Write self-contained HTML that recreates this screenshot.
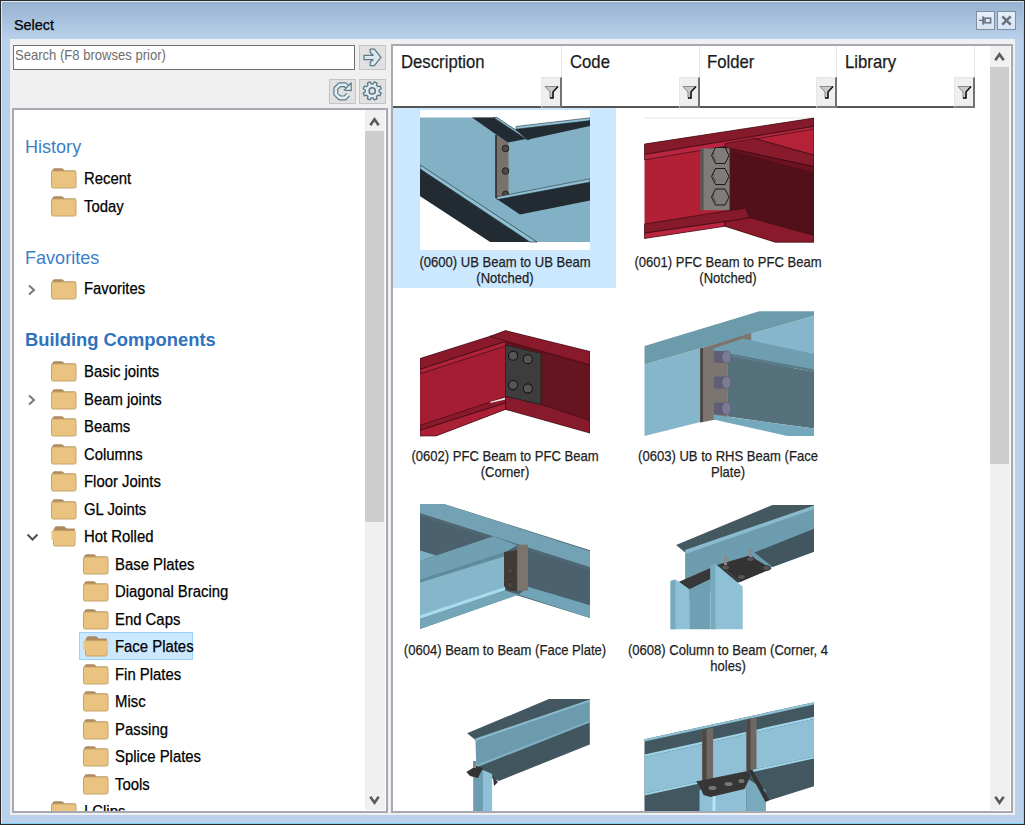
<!DOCTYPE html>
<html><head><meta charset="utf-8">
<style>
*{margin:0;padding:0;box-sizing:border-box}
html,body{width:1025px;height:825px;overflow:hidden;background:#b9d1ea;font-family:"Liberation Sans",sans-serif}
.a{position:absolute}
.it,.cap,.col,#ttxt{-webkit-text-stroke:0.25px currentColor}
#frame{left:0;top:0;width:1025px;height:825px;border:1px solid #2b2b2b;background:#b9d1ea}
#hl{left:1px;top:1px;width:1023px;height:823px;border:1px solid #dde8f3;border-right-color:#7fd3ec;border-bottom-color:#7fd3ec}
#title{left:2px;top:2px;width:1021px;height:37px;background:linear-gradient(#97b1d0,#b9d1ea)}
#ttxt{left:14px;top:14.5px;font-size:15px;line-height:19px;color:#000;transform:scaleX(0.96);transform-origin:0 0}
.tbtn{width:19px;height:19px;border:1px solid #7f8ea3;background:linear-gradient(#e6eff9,#d7e4f2)}
#panel{left:10px;top:39px;width:1005px;height:776px;background:#f0f0f0}
#search{left:13px;top:45px;width:342px;height:25px;border:1px solid #6e6e6e;background:#fff}
#stxt{left:15px;top:46px;font-size:15px;line-height:17px;color:#6d6d6d;transform:scaleX(0.87);transform-origin:0 0;white-space:nowrap}
.btn{border:1px solid #c4c4c4;background:#e1e1e1}
.pane{border:2px solid #a6a9b1;background:#fff;overflow:hidden}
.clip{overflow:hidden}
.in{left:0;top:0;width:1025px;height:825px}
.vs{background:#f0f0f0}
.thumbv{background:#cdcdcd}
.hdr{color:#3b7ec9;font-size:19px;line-height:22px;white-space:nowrap;transform:scaleX(0.95);transform-origin:0 0}
.b{font-weight:bold;font-size:18px;color:#2f72bd;transform:scaleX(1.02)}
.it{font-size:16px;line-height:19px;color:#000;white-space:nowrap;transform:scaleX(0.93);transform-origin:0 0}
.cap{font-size:15px;line-height:16.5px;color:#1e1e1e;text-align:center;white-space:nowrap;transform:scaleX(0.87);transform-origin:50% 0}
.col{font-size:19px;line-height:22px;color:#1a1a1a;white-space:nowrap;transform:scaleX(0.88);transform-origin:0 0}
.fbtn{width:21px;height:30px;background:#f0f0f0;border-right:1px solid #6b6b6b;border-bottom:1px solid #6b6b6b;border-top:1px solid #e3e3e3;border-left:1px solid #e3e3e3}
</style></head><body>
<svg width="0" height="0" style="position:absolute">
<defs>
<g id="fc">
<path d="M0.5 3.5 L2 1 Q2.6 0.2 3.6 0.2 L10.6 0.2 Q11.5 0.2 12.2 1 L13.6 2.6 L24 2.6 Q25 2.6 25 3.6 L25 5 L0.5 5 Z" fill="#ac8a5e"/>
<rect x="0.5" y="3" width="24.5" height="17" rx="1.6" fill="#e9c37f" stroke="#c7a46f" stroke-width="1"/>
</g>
<g id="fo">
<path d="M2.5 3.5 L4 1 Q4.6 0.2 5.6 0.2 L12.6 0.2 Q13.5 0.2 14.2 1 L15.6 2.6 L23 2.6 Q24 2.6 24 3.6 L24 6 L2.5 6 Z" fill="#ac8a5e"/>
<path d="M2.5 6 L2.5 18.5 Q2.5 20 4 20 L22.5 20 Q24 20 24 18.5 L24 6 Z" fill="#e9c37f" stroke="#c7a46f" stroke-width="1"/>
<path d="M0.5 6.5 Q0.5 5 2 5 L23.5 5 Q25 5 25 6.5 L25 13 Q25 14.5 23.5 14.5 L2 14.5 Q0.5 14.5 0.5 13 Z" fill="#e9c37f"/><path d="M0.5 6.5 Q0.5 5 2 5 L23.5 5 Q25 5 25 6.5" fill="none" stroke="#e3bd7c" stroke-width="0.8"/>
</g>
</defs></svg>
<div class="a" id="frame"></div>
<div class="a" id="hl"></div>
<div class="a" id="title"></div>
<div class="a" id="ttxt">Select</div>
<div class="a tbtn" style="left:976px;top:11px"></div>
<svg class="a" style="left:976px;top:11px" width="19" height="19" viewBox="0 0 19 19"><path d="M3 9.4 H7" stroke="#6b7582" stroke-width="1.3"/><path d="M7.2 5.4 V13.7" stroke="#6b7582" stroke-width="2"/><rect x="9" y="7.2" width="5.6" height="4.6" fill="none" stroke="#6b7582" stroke-width="1.6"/></svg>
<div class="a tbtn" style="left:997px;top:11px"></div>
<svg class="a" style="left:997px;top:11px" width="19" height="19" viewBox="0 0 19 19"><path d="M5.3 5.3 L13.7 13.7 M13.7 5.3 L5.3 13.7" stroke="#6b7582" stroke-width="2.6"/></svg>
<div class="a" id="panel"></div>
<div class="a" id="search"></div>
<div class="a" id="stxt">Search (F8 browses prior)</div>
<div class="a btn" style="left:359px;top:45px;width:27px;height:25px"></div>
<svg class="a" style="left:359px;top:45px" width="27" height="25" viewBox="0 0 27 25"><path d="M5 10.3 H14.2 L11.2 7.6 V4.1 H15.4 L21.9 12.4 L15.4 20.6 H11.2 V17.2 L14.2 14.6 H5 Z" fill="#dde8ee" stroke="#5b7a89" stroke-width="1.3" stroke-linejoin="round"/></svg>
<div class="a btn" style="left:329px;top:79px;width:27px;height:25px"></div>
<svg class="a" style="left:329px;top:79px" width="27" height="25" viewBox="0 0 27 25"><path d="M18.46 8.06 L16.13 5.70 L10.67 5.70 L6.80 9.57 L6.80 15.03 L10.67 18.90 L16.13 18.90 L19.05 15.56" fill="none" stroke="#5b7a89" stroke-width="5" stroke-linejoin="round"/><path d="M18.46 8.06 L16.13 5.70 L10.67 5.70 L6.80 9.57 L6.80 15.03 L10.67 18.90 L16.13 18.90 L19.05 15.56" fill="none" stroke="#e3ecf0" stroke-width="2.6" stroke-linejoin="round"/><path d="M22.2 3.8 L22.2 11.6 L15.2 11.2 Z" fill="#e3ecf0" stroke="#5b7a89" stroke-width="1.2" stroke-linejoin="round"/></svg>
<div class="a btn" style="left:359px;top:79px;width:27px;height:25px"></div>
<svg class="a" style="left:359px;top:79px" width="27" height="25" viewBox="0 0 27 25"><path d="M20.14 12.78 L22.15 14.05 L21.04 16.71 L18.73 16.19 L17.49 17.43 L18.01 19.74 L15.35 20.85 L14.08 18.84 L12.32 18.84 L11.05 20.85 L8.39 19.74 L8.91 17.43 L7.67 16.19 L5.36 16.71 L4.25 14.05 L6.26 12.78 L6.26 11.02 L4.25 9.75 L5.36 7.09 L7.67 7.61 L8.91 6.37 L8.39 4.06 L11.05 2.95 L12.32 4.96 L14.08 4.96 L15.35 2.95 L18.01 4.06 L17.49 6.37 L18.73 7.61 L21.04 7.09 L22.15 9.75 L20.14 11.02 Z" fill="#e3ecf0" stroke="#5b7a89" stroke-width="1.4" stroke-linejoin="round"/><circle cx="13.2" cy="11.9" r="3.1" fill="#e1e1e1" stroke="#5b7a89" stroke-width="1.5"/></svg>

<div class="a pane" style="left:12px;top:108px;width:376px;height:705px">
<div class="a" style="left:-14px;top:-110px;width:1025px;height:825px">
<div class="a vs" style="left:365px;top:110px;width:20px;height:700px"></div>
<div class="a thumbv" style="left:365px;top:131px;width:19px;height:391px"></div>
<svg class="a" style="left:368px;top:116px" width="13" height="12" viewBox="0 0 13 12"><path d="M2.3 9.3 L6.5 3.3 L10.7 9.3" fill="none" stroke="#5a5a5a" stroke-width="2.6"/></svg>
<svg class="a" style="left:368px;top:794px" width="13" height="12" viewBox="0 0 13 12"><path d="M2.3 2.7 L6.5 8.7 L10.7 2.7" fill="none" stroke="#5a5a5a" stroke-width="2.6"/></svg>
<div class="a hdr" style="left:25px;top:136px">History</div>
<svg class="a" style="left:51px;top:168px" width="26" height="21" viewBox="0 0 26 21"><use href="#fc"/></svg>
<div class="a it" style="left:84px;top:169.2px">Recent</div>
<svg class="a" style="left:51px;top:195.5px" width="26" height="21" viewBox="0 0 26 21"><use href="#fc"/></svg>
<div class="a it" style="left:84px;top:196.7px">Today</div>
<div class="a hdr" style="left:25px;top:246.5px">Favorites</div>
<svg class="a" style="left:27px;top:284px" width="10" height="12" viewBox="0 0 10 12"><path d="M2 1.5 L7 6 L2 10.5" fill="none" stroke="#7a7a7a" stroke-width="2"/></svg>
<svg class="a" style="left:51px;top:278.5px" width="26" height="21" viewBox="0 0 26 21"><use href="#fc"/></svg>
<div class="a it" style="left:84px;top:279.3px">Favorites</div>
<div class="a hdr b" style="left:25px;top:329px">Building Components</div>
<svg class="a" style="left:51px;top:361.4px" width="26" height="21" viewBox="0 0 26 21"><use href="#fc"/></svg>
<div class="a it" style="left:84px;top:362.2px">Basic joints</div>
<svg class="a" style="left:27px;top:393.9px" width="10" height="12" viewBox="0 0 10 12"><path d="M2 1.5 L7 6 L2 10.5" fill="none" stroke="#7a7a7a" stroke-width="2"/></svg>
<svg class="a" style="left:51px;top:388.9px" width="26" height="21" viewBox="0 0 26 21"><use href="#fc"/></svg>
<div class="a it" style="left:84px;top:389.7px">Beam joints</div>
<svg class="a" style="left:51px;top:416.4px" width="26" height="21" viewBox="0 0 26 21"><use href="#fc"/></svg>
<div class="a it" style="left:84px;top:417.2px">Beams</div>
<svg class="a" style="left:51px;top:443.9px" width="26" height="21" viewBox="0 0 26 21"><use href="#fc"/></svg>
<div class="a it" style="left:84px;top:444.7px">Columns</div>
<svg class="a" style="left:51px;top:471.4px" width="26" height="21" viewBox="0 0 26 21"><use href="#fc"/></svg>
<div class="a it" style="left:84px;top:472.2px">Floor Joints</div>
<svg class="a" style="left:51px;top:498.9px" width="26" height="21" viewBox="0 0 26 21"><use href="#fc"/></svg>
<div class="a it" style="left:84px;top:499.7px">GL Joints</div>
<div class="a" style="left:79px;top:632px;width:114px;height:28px;background:#cce8ff;border:1px solid #99d1ff"></div>
<svg class="a" style="left:26px;top:532.9px" width="13" height="9" viewBox="0 0 13 9"><path d="M1.5 1.5 L6.5 6.5 L11.5 1.5" fill="none" stroke="#505050" stroke-width="2"/></svg>
<svg class="a" style="left:51px;top:526.4px" width="26" height="21" viewBox="0 0 26 21"><use href="#fo"/></svg>
<div class="a it" style="left:84px;top:527.1999999999999px">Hot Rolled</div>
<svg class="a" style="left:83px;top:553.9px" width="26" height="21" viewBox="0 0 26 21"><use href="#fc"/></svg>
<div class="a it" style="left:115px;top:554.6999999999999px">Base Plates</div>
<svg class="a" style="left:83px;top:581.4px" width="26" height="21" viewBox="0 0 26 21"><use href="#fc"/></svg>
<div class="a it" style="left:115px;top:582.1999999999999px">Diagonal Bracing</div>
<svg class="a" style="left:83px;top:608.9px" width="26" height="21" viewBox="0 0 26 21"><use href="#fc"/></svg>
<div class="a it" style="left:115px;top:609.6999999999999px">End Caps</div>
<div class="a" style="left:79px;top:632px;width:114px;height:28px;background:#cce8ff;border:1px solid #99d1ff"></div>
<svg class="a" style="left:83px;top:636.4px" width="26" height="21" viewBox="0 0 26 21"><use href="#fo"/></svg>
<div class="a it" style="left:115px;top:637.1999999999999px">Face Plates</div>
<svg class="a" style="left:83px;top:663.9px" width="26" height="21" viewBox="0 0 26 21"><use href="#fc"/></svg>
<div class="a it" style="left:115px;top:664.6999999999999px">Fin Plates</div>
<svg class="a" style="left:83px;top:691.4px" width="26" height="21" viewBox="0 0 26 21"><use href="#fc"/></svg>
<div class="a it" style="left:115px;top:692.1999999999999px">Misc</div>
<svg class="a" style="left:83px;top:718.9px" width="26" height="21" viewBox="0 0 26 21"><use href="#fc"/></svg>
<div class="a it" style="left:115px;top:719.6999999999999px">Passing</div>
<svg class="a" style="left:83px;top:746.4px" width="26" height="21" viewBox="0 0 26 21"><use href="#fc"/></svg>
<div class="a it" style="left:115px;top:747.1999999999999px">Splice Plates</div>
<svg class="a" style="left:83px;top:773.9px" width="26" height="21" viewBox="0 0 26 21"><use href="#fc"/></svg>
<div class="a it" style="left:115px;top:774.6999999999999px">Tools</div>
<svg class="a" style="left:51px;top:801.4px" width="26" height="21" viewBox="0 0 26 21"><use href="#fc"/></svg>
<div class="a it" style="left:84px;top:802.1999999999999px">I Clips</div>
</div>
</div>
<div class="a pane" style="left:391px;top:44px;width:622px;height:769px">
<div class="a" style="left:-393px;top:-46px;width:1025px;height:825px">
<div class="a" style="left:990px;top:45px;width:20px;height:765px;background:#f0f0f0"></div>
<div class="a" style="left:990px;top:67px;width:19px;height:397px;background:#cdcdcd"></div>
<svg class="a" style="left:993px;top:51px" width="13" height="12" viewBox="0 0 13 12"><path d="M2.3 9.3 L6.5 3.3 L10.7 9.3" fill="none" stroke="#5a5a5a" stroke-width="2.6"/></svg>
<svg class="a" style="left:993px;top:794px" width="13" height="12" viewBox="0 0 13 12"><path d="M2.3 2.7 L6.5 8.7 L10.7 2.7" fill="none" stroke="#5a5a5a" stroke-width="2.6"/></svg>
<div class="a" style="left:392px;top:45px;width:170px;height:61px;background:#fff"></div>
<div class="a" style="left:561px;top:46px;width:1px;height:31px;background:#e5e5e5"></div>
<div class="a" style="left:392px;top:106px;width:149px;height:2px;background:#565656"></div>
<div class="a" style="left:541px;top:77px;width:21px;height:31px;background:#efefef;border-left:1px solid #e6e6e6;border-top:1px solid #e6e6e6;border-right:2px solid #727272;border-bottom:2px solid #7a7a7a"></div>
<svg class="a" style="left:544px;top:85px" width="15" height="15" viewBox="0 0 15 15"><path d="M1 1.5 L14 1.5 L9 7 L9 13 L6 13 L6 7 Z" fill="#c9c9c9" stroke="#8a8a8a" stroke-width="1"/><path d="M14 1.5 L9 7 L9 13 L6 13" fill="none" stroke="#111" stroke-width="1.5"/></svg>
<div class="a col" style="left:400.5px;top:51px">Description</div>
<div class="a" style="left:562px;top:45px;width:138px;height:61px;background:#fff"></div>
<div class="a" style="left:699px;top:46px;width:1px;height:31px;background:#e5e5e5"></div>
<div class="a" style="left:562px;top:106px;width:117px;height:2px;background:#565656"></div>
<div class="a" style="left:679px;top:77px;width:21px;height:31px;background:#efefef;border-left:1px solid #e6e6e6;border-top:1px solid #e6e6e6;border-right:2px solid #727272;border-bottom:2px solid #7a7a7a"></div>
<svg class="a" style="left:682px;top:85px" width="15" height="15" viewBox="0 0 15 15"><path d="M1 1.5 L14 1.5 L9 7 L9 13 L6 13 L6 7 Z" fill="#c9c9c9" stroke="#8a8a8a" stroke-width="1"/><path d="M14 1.5 L9 7 L9 13 L6 13" fill="none" stroke="#111" stroke-width="1.5"/></svg>
<div class="a col" style="left:569.5px;top:51px">Code</div>
<div class="a" style="left:700px;top:45px;width:137px;height:61px;background:#fff"></div>
<div class="a" style="left:836px;top:46px;width:1px;height:31px;background:#e5e5e5"></div>
<div class="a" style="left:700px;top:106px;width:116px;height:2px;background:#565656"></div>
<div class="a" style="left:816px;top:77px;width:21px;height:31px;background:#efefef;border-left:1px solid #e6e6e6;border-top:1px solid #e6e6e6;border-right:2px solid #727272;border-bottom:2px solid #7a7a7a"></div>
<svg class="a" style="left:819px;top:85px" width="15" height="15" viewBox="0 0 15 15"><path d="M1 1.5 L14 1.5 L9 7 L9 13 L6 13 L6 7 Z" fill="#c9c9c9" stroke="#8a8a8a" stroke-width="1"/><path d="M14 1.5 L9 7 L9 13 L6 13" fill="none" stroke="#111" stroke-width="1.5"/></svg>
<div class="a col" style="left:706.5px;top:51px">Folder</div>
<div class="a" style="left:837px;top:45px;width:138px;height:61px;background:#fff"></div>
<div class="a" style="left:974px;top:46px;width:1px;height:31px;background:#e5e5e5"></div>
<div class="a" style="left:837px;top:106px;width:117px;height:2px;background:#565656"></div>
<div class="a" style="left:954px;top:77px;width:21px;height:31px;background:#efefef;border-left:1px solid #e6e6e6;border-top:1px solid #e6e6e6;border-right:2px solid #727272;border-bottom:2px solid #7a7a7a"></div>
<svg class="a" style="left:957px;top:85px" width="15" height="15" viewBox="0 0 15 15"><path d="M1 1.5 L14 1.5 L9 7 L9 13 L6 13 L6 7 Z" fill="#c9c9c9" stroke="#8a8a8a" stroke-width="1"/><path d="M14 1.5 L9 7 L9 13 L6 13" fill="none" stroke="#111" stroke-width="1.5"/></svg>
<div class="a col" style="left:844.5px;top:51px">Library</div>
<div class="a" style="left:393px;top:108px;width:223px;height:180px;background:#cce8ff"></div>
<div class="a cap" style="left:354.75px;top:253.9px;width:300px">(0600) UB Beam to UB Beam<br>(Notched)</div>
<div class="a cap" style="left:578.25px;top:253.9px;width:300px">(0601) PFC Beam to PFC Beam<br>(Notched)</div>
<div class="a cap" style="left:354.75px;top:447.9px;width:300px">(0602) PFC Beam to PFC Beam<br>(Corner)</div>
<div class="a cap" style="left:578.25px;top:447.9px;width:300px">(0603) UB to RHS Beam (Face<br>Plate)</div>
<div class="a cap" style="left:354.75px;top:641.9px;width:300px">(0604) Beam to Beam (Face Plate)</div>
<div class="a cap" style="left:578.25px;top:641.9px;width:300px">(0608) Column to Beam (Corner, 4<br>holes)</div>
<svg class="a" style="left:420px;top:110px" width="170" height="140" viewBox="420 110 170 140">
<rect x="420" y="110" width="170" height="140" fill="#fff"/>
<polygon points="420,117.5 472,117.5 496,117.5 511,127 516,129.5 516,126.4 590,117.8 590,242 420,242" fill="#82b0c5"/>

<polygon points="472,117.5 493.5,117.5 526,139 507.5,142.5" fill="#222b32"/>
<polygon points="493.5,117.5 497,117.5 530,139.5 526,139" fill="#8fc1d5" stroke="#1c2328" stroke-width="0.6"/>
<polygon points="516,128.5 590,119.5 590,126 527,139.7 516,130" fill="#222b32"/>
<polygon points="516,126.4 590,117.8 590,120.6 516,129.2" fill="#8fc1d5" stroke="#1c2328" stroke-width="0.5"/>
<polygon points="495.5,134.5 508.5,143 508.5,198 495.5,198" fill="#7a716d"/>
<line x1="496" y1="135" x2="496" y2="198" stroke="#141414" stroke-width="1.2"/>
<g fill="#4f4a48" stroke="#222" stroke-width="1"><circle cx="505.5" cy="148.5" r="3.3"/><circle cx="505.5" cy="171" r="3.3"/><circle cx="505.5" cy="194" r="3"/></g>
<polygon points="496,198.5 590,182 590,200.6 520,214.5" fill="#222b32"/>
<polygon points="497,196.8 590,178.8 590,182 497,199.6" fill="#8fc1d5" stroke="#1c2328" stroke-width="0.5"/>
<polygon points="420,168.8 530,242 490,242 420,196.3" fill="#222b32"/>
<polygon points="420,164.8 537,242 530,242 420,168.8" fill="#8fc1d5" stroke="#1c2328" stroke-width="0.6"/>
<polygon points="420,196.3 490,242 420,242" fill="#fff"/>
</svg>
<svg class="a" style="left:643.5px;top:110px" width="170" height="140" viewBox="643.5 110 170 140">
<rect x="643.5" y="110" width="170" height="140" fill="#fff"/>
<rect x="644" y="117.5" width="169.5" height="1" fill="#e6e6e6"/>
<polygon points="644,144 813.5,118 813.5,242.2 774.6,242.2 724.4,226.3 644,238.5" fill="#b22036"/>
<polygon points="644,144 813.5,118 813.5,126.4 644,154.6" fill="#851a2a" stroke="#2a0a0e" stroke-width="0.6"/>
<polygon points="644,154.6 813.5,126.4 813.5,131.5 644,159.8" fill="#bb2540" stroke="#2a0a0e" stroke-width="0.6"/>
<polygon points="754,139 813.5,129 813.5,155.2" fill="#b52238" stroke="#2a0a0e" stroke-width="0.6"/>
<polygon points="724.5,143.5 754,138.3 813.5,155.2 813.5,166.7 724.5,147.5" fill="#871a2b" stroke="#2a0a0e" stroke-width="0.6"/>
<polygon points="724.5,147.5 813.5,166.7 813.5,173.2 729,150.5" fill="#6a1220" stroke="#2a0a0e" stroke-width="0.6"/>
<polygon points="729,150.5 813.5,173.2 813.5,235.4 749.3,217.8 729,212" fill="#52101a"/>
<rect x="700" y="148.4" width="29" height="61.8" fill="#7e7b79"/>
<rect x="700" y="148.4" width="3" height="61.8" fill="#555"/>
<g fill="#7f7c7a" stroke="#1a1a1a" stroke-width="1">
<polygon points="715,147.5 724.5,147.5 728.5,155.5 724.5,163.5 715,163.5 711,155.5"/>
<polygon points="715,168.5 724.5,168.5 728.5,176.5 724.5,184.5 715,184.5 711,176.5"/>
<polygon points="715,189 724.5,189 728.5,197 724.5,205 715,205 711,197"/>
</g>
<g fill="none" stroke="#3a3a3a" stroke-width="0.7"><path d="M713.5 150 L712.5 155.5 L715.5 161"/><path d="M713.5 171 L712.5 176.5 L715.5 182"/><path d="M713.5 191.5 L712.5 197 L715.5 202.5"/></g>
<polygon points="644,224 729,210.5 745,208 749.3,217.8 724.4,221.7 644,233.2" fill="#851a2a" stroke="#2a0a0e" stroke-width="0.6"/>
<polygon points="644,233.2 724.4,221.7 724.4,226.3 644,238.5" fill="#bb2540" stroke="#2a0a0e" stroke-width="0.6"/>
<polygon points="724.4,221.7 749.3,217.8 813.5,235.4 813.5,242.2 774.6,242.2 724.4,226.3" fill="#8a1a2b" stroke="#2a0a0e" stroke-width="0.6"/>
</svg>
<svg class="a" style="left:420px;top:304px" width="170" height="140" viewBox="420 304 170 140">
<rect x="420" y="304" width="170" height="140" fill="#fff"/>
<polygon points="420,358.5 490.3,336.2 505.5,330.6 590,351.5 590,433.1 505.5,409.4 436,436 420,436" fill="#a51d32"/>
<polygon points="420,358.5 490.3,336.2 505.5,333 505.5,341.5 420,369.4" fill="#8a1a2b" stroke="#2a0a0e" stroke-width="0.6"/>
<polygon points="420,369.4 505.5,341.5 505.5,346 420,373.8" fill="#b02238" stroke="#2a0a0e" stroke-width="0.6"/>
<polygon points="420,425.4 505.5,397 505.5,403 420,430.3" fill="#8a1a2b" stroke="#2a0a0e" stroke-width="0.6"/>
<polygon points="420,430.3 505.5,403 505.5,409.4 436,436 420,436" fill="#ac2036" stroke="#2a0a0e" stroke-width="0.6"/>
<polygon points="490.3,401.7 505.5,397.5 505.5,399.5 490.3,403" fill="#e8e8e8"/>
<polygon points="490.3,336.2 505.5,330.6 590,351.5 590,364.7 505.5,341" fill="#891a2b" stroke="#2a0a0e" stroke-width="0.6"/>
<polygon points="505.5,341 590,364.7 590,366.5 505.5,343" fill="#5a1019"/>
<polygon points="505.5,343 590,366.5 590,420.5 541,404.5 505.5,396" fill="#661420"/>
<polygon points="505.5,396 541,404.5 590,420.5 590,433.1 505.5,409.4" fill="#871a2b" stroke="#2a0a0e" stroke-width="0.6"/>
<polygon points="505.5,345 541,353.6 541,404.5 505.5,396.1" fill="#3d3d3d" stroke="#1a1a1a" stroke-width="0.6"/>
<g fill="#555" stroke="#151515" stroke-width="1.1">
<circle cx="513.1" cy="355.7" r="4.6"/><circle cx="527.8" cy="359.2" r="4.6"/>
<circle cx="513.1" cy="385" r="4.6"/><circle cx="527.8" cy="388.5" r="4.6"/>
</g>
</svg>
<svg class="a" style="left:643.5px;top:304px" width="170" height="140" viewBox="643.5 304 170 140">
<rect x="643.5" y="304" width="170" height="140" fill="#fff"/>
<polygon points="644,364.5 813.7,315.6 813.7,356 700,422 644,435.9" fill="#86b6cb"/>
<polygon points="644,345.9 758.8,311.3 813.7,311.3 813.7,315.6 644,364.5" fill="#6c9bac"/>
<polygon points="700,348.5 750.7,333 750.7,340 727,347 727,418 713,420 700,422.5" fill="#7b746f"/>
<polygon points="699.7,348.5 702.5,347.7 702.5,421.8 699.7,422.5" fill="#4a4542"/>
<polygon points="713,348.4 742.6,338.6 813.7,354.1 813.7,372 713,350.5" fill="#6e9eaf"/>
<polygon points="713,350.5 813.7,369.6 813.7,372 713,352.5" fill="#587985"/>
<polygon points="727,355.2 813.7,372 813.7,428.6 727,416.6" fill="#54717c"/>
<polygon points="713,414.7 813.7,428.6 813.7,435.9 786.7,435.9 713,419.6" fill="#74a8bb"/>
<g><rect x="713.5" y="351" width="12" height="12" rx="2" fill="#5e5e76"/><ellipse cx="726" cy="357" rx="4.6" ry="6.2" fill="#7b7b97" stroke="#55556b" stroke-width="0.6"/><rect x="713.5" y="376.5" width="12" height="12" rx="2" fill="#5e5e76"/><ellipse cx="726" cy="382.5" rx="4.6" ry="6.2" fill="#7b7b97" stroke="#55556b" stroke-width="0.6"/><rect x="713.5" y="402.5" width="12" height="12" rx="2" fill="#5e5e76"/><ellipse cx="726" cy="408.5" rx="4.6" ry="6.2" fill="#7b7b97" stroke="#55556b" stroke-width="0.6"/></g>
</svg>
<svg class="a" style="left:420px;top:498px" width="170" height="140" viewBox="420 498 170 140">
<rect x="420" y="498" width="170" height="140" fill="#fff"/>
<polygon points="420,503.9 443.8,503.9 590,550.3 590,618 516,595 420,629" fill="#4b626e"/>
<polygon points="420,503.9 443.8,503.9 590,551.3 590,567.3 420,513.2" fill="#72a2b4"/>
<polygon points="420,513.2 590,567.3 590,570.7 420,516" fill="#506874"/>
<polygon points="420,550.6 436.2,555.6 420,561" fill="#7eb0c2"/>
<polygon points="420,561 436.2,555.6 493.4,536.3 517.3,545.3 505,552.3 420,580" fill="#70a0b2"/>

<polygon points="420,580 505,552.3 505,556 420,582.5" fill="#5f8d9e"/>
<polygon points="420,582.5 505,556 505,588 420,615" fill="#86b6ca"/>
<polygon points="420,615 505,587 505,590.5 420,619" fill="#a6dcef"/>
<polygon points="420,619 505,590.5 518.7,594.7 420,629" fill="#74a6b8"/>
<polygon points="528,586.7 590,605.3 590,618 518.7,594.7" fill="#72a4b7"/>
<polygon points="504,552 517.3,550 517.3,591.5 508,590.5 504,586" fill="#403b38"/>
<rect x="517.3" y="544.7" width="10.7" height="46" fill="#7b736e"/>
<g fill="#4a4542" stroke="#2e2a28" stroke-width="0.6"><circle cx="510" cy="571" r="3"/><circle cx="510" cy="585" r="3"/></g>
</svg>
<svg class="a" style="left:643.5px;top:498px" width="170" height="140" viewBox="643.5 498 170 140">
<rect x="643.5" y="498" width="170" height="140" fill="#fff"/>
<polygon points="684.6,552.4 813.7,506.5 813.7,551.6 772,567.1 740,582 688.7,600 684.6,600" fill="#6d9cae"/>
<polygon points="675.6,545 772,504.9 813.7,504.9 813.7,506.5 684.6,552.4" fill="#43585f"/>
<polygon points="684.6,550 813.7,505.5 813.7,509 684.6,554" fill="#8abacd"/>
<polygon points="754,552.4 813.7,528.6 813.7,551.6 772,567.1" fill="#42565f"/>
<polygon points="718,564.6 749.1,555.6 771.2,568.7 740.1,581.8" fill="#333"/>
<polygon points="678,582 718,564.6 740.1,581.8 688.7,590" fill="#383838"/>
<g fill="#555" stroke="#222" stroke-width="0.6">
<ellipse cx="725" cy="567.5" rx="4" ry="2.5"/><ellipse cx="750" cy="559" rx="4" ry="2.5"/><ellipse cx="766" cy="568" rx="4" ry="2.5"/><ellipse cx="741" cy="577" rx="4" ry="2.5"/>
</g>
<rect x="723.5" y="556" width="3" height="9" fill="#8a8a8a"/><rect x="748.5" y="548" width="3" height="9" fill="#8a8a8a"/>
<polygon points="688.7,589.2 710,579 710,629.3 688.7,629.3" fill="#6f9fb2"/>
<polygon points="670,581 675,579.5 688.7,589 688.7,629.3 670,629.3" fill="#8fc1d6"/>
<polygon points="670,581 675,579.5 675,629.3 670,629.3" fill="#78aabd"/>
<polygon points="710,565.2 715,564 742.2,586.7 742.2,629.3 710,629.3" fill="#8fc1d6"/>
<polygon points="710,565.2 715,564 715,629.3 710,629.3" fill="#79abbe"/>
</svg>
<svg class="a" style="left:420px;top:692px" width="170" height="140" viewBox="420 692 170 140">
<rect x="420" y="692" width="170" height="140" fill="#fff"/>
<polygon points="467.1,733.2 548.9,699.1 589.8,699.1 589.8,700.5 475.5,740" fill="#42575f"/>
<polygon points="475.5,740 589.8,700.5 589.8,721.8 476.2,766.5" fill="#6c9bad"/>
<polygon points="475.5,738.5 589.8,699.5 589.8,701.5 475.5,741" fill="#8abacd"/>
<polygon points="476.2,766.5 589.8,721.8 589.8,744.5 498.9,780.9 476,772" fill="#42565f"/>
<polygon points="476.2,765 589.8,720.5 589.8,722.5 476.2,767.5" fill="#7fb0c3"/>
<polygon points="473.2,772 483,770 483,832 473.2,832" fill="#6d9db0"/>
<polygon points="483,770 492.1,774 492.1,832 483,832" fill="#8fc1d6"/>
<polygon points="466.4,772 476,766 483,768 478,778 470,776" fill="#333"/>
<polygon points="493,777 498,782 494,786" fill="#333"/>
<rect x="473" y="761" width="3" height="7" fill="#888"/>
</svg>
<svg class="a" style="left:643.5px;top:692px" width="170" height="140" viewBox="643.5 692 170 140">
<rect x="643.5" y="692" width="170" height="140" fill="#fff"/>
<polygon points="644,739.2 813.7,702.2 813.7,832 644,832" fill="#42575f"/>
<polygon points="644,739.2 813.7,702.2 813.7,704.5 644,741.5" fill="#8fc1d6"/>
<polygon points="644,754.6 813.7,716.7 813.7,719 644,757" fill="#a0d4e8"/>
<polygon points="644,757 813.7,719 813.7,756.4 644,793.4" fill="#8fc0d5"/>
<polygon points="644,793.4 813.7,756.4 813.7,758.5 644,795.5" fill="#a0d4e8"/>
<polygon points="765,801.5 813.7,786.2 813.7,832 765,832" fill="#fff"/>
<polygon points="699,790 746,778 746,832 699,832" fill="#8fc1d6"/><rect x="712" y="787" width="3" height="45" fill="#b4e6f6"/>
<polygon points="746,778 765,790 765,832 746,832" fill="#78a9bc"/>
<polygon points="701.8,730.2 712.6,727.8 712.6,779.8 701.8,782" fill="#6f6864"/>
<polygon points="701.8,730.2 706,729.2 706,781 701.8,782" fill="#4d4845"/>
<polygon points="746,719.4 756,717.3 756,769 746,771" fill="#6f6864"/>
<polygon points="746,719.4 750,718.5 750,770.2 746,771" fill="#4d4845"/>
<polygon points="695.5,781.6 748.7,770.8 750,776 744,789 710,797 703,795 699,786" fill="#363636"/>
<polygon points="748,770 752,770 769,800 765,802" fill="#333"/>
<g fill="#777"><ellipse cx="712" cy="788" rx="4" ry="2"/><ellipse cx="728" cy="784" rx="4" ry="2"/><ellipse cx="741" cy="781" rx="3" ry="2"/></g>
</svg>

</div>
</div>
</body></html>
